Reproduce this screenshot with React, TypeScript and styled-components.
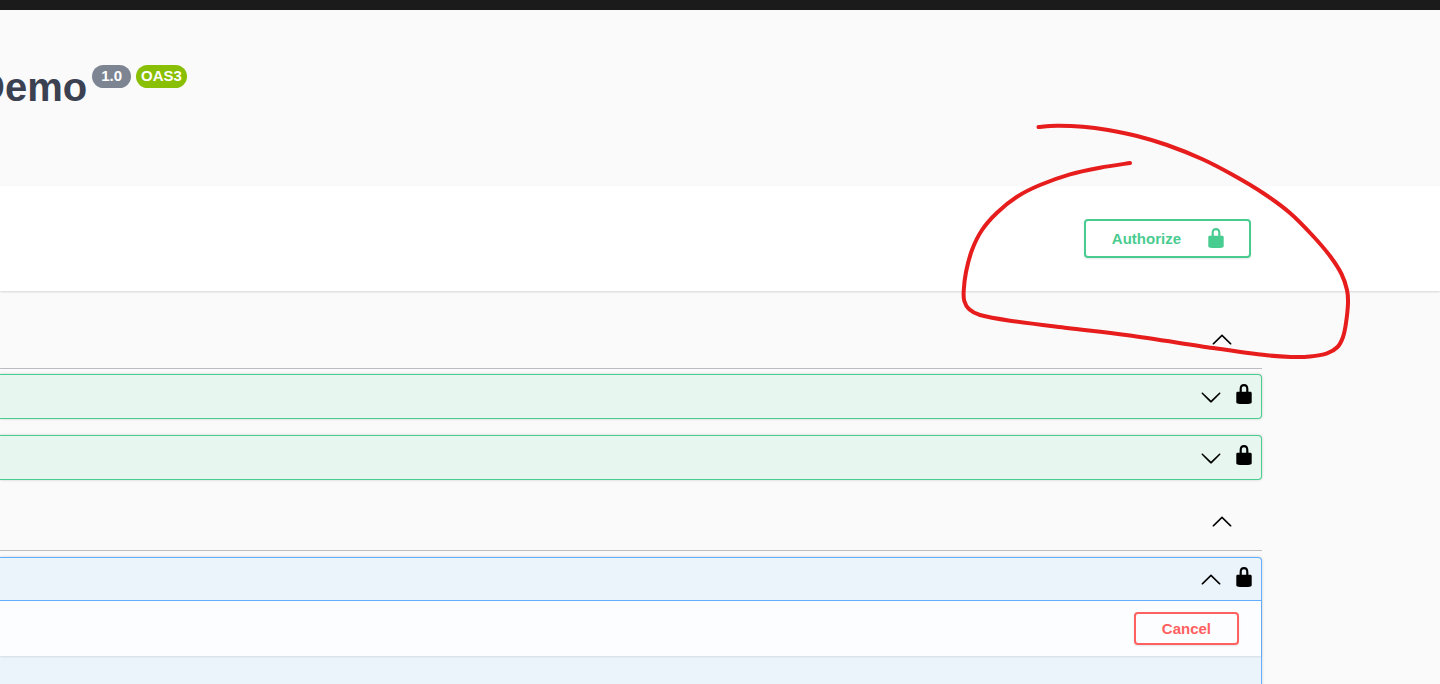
import React from "react";
import styled, { createGlobalStyle } from "styled-components";

const GlobalStyle = createGlobalStyle`
  * { box-sizing: border-box; }
  body {
    margin: 0;
    background: #fafafa;
    color: #3b4151;
    font-family: "Liberation Sans", Arial, sans-serif;
  }
`;

const Page = styled.div`
  position: relative;
  height: 100vh;
  overflow: hidden;
`;

const TopBar = styled.div`
  height: 10px;
  background: #1b1b1b;
`;

const Info = styled.header`
  display: flex;
  align-items: flex-start;
  gap: 5px;
  height: 176px;
  padding-top: 55px;
  margin-left: -24px;
`;

const Title = styled.h1`
  margin: 0;
  font-size: 40px;
  line-height: 44px;
  font-weight: 700;
`;

const Badge = styled.span<{ $color: string; $pad: number }>`
  height: 23px;
  padding: 0 ${(p) => p.$pad}px;
  border-radius: 12px;
  background: ${(p) => p.$color};
  color: #fff;
  font-size: 15px;
  line-height: 22px;
  font-weight: 700;
`;

const SchemeBand = styled.section`
  display: flex;
  justify-content: flex-end;
  padding: 33px 189px 33px 0;
  background: #fff;
  box-shadow: 0 1px 2px 0 rgba(0, 0, 0, 0.15);
`;

const Button = styled.button<{ $color: string }>`
  display: flex;
  align-items: center;
  height: 33px;
  padding: 0 26px;
  border: 2px solid ${(p) => p.$color};
  border-radius: 4px;
  background: transparent;
  box-shadow: 0 1px 2px rgba(0, 0, 0, 0.1);
  color: ${(p) => p.$color};
  font: 700 15px "Liberation Sans", Arial, sans-serif;
`;

const AuthorizeButton = styled(Button)`
  gap: 24px;
  height: 39px;
  padding: 0 22px 0 26px;
  svg {
    margin-bottom: 2px;
    fill: currentColor;
  }
`;

const Operations = styled.main`
  display: flex;
  flex-direction: column;
  padding-right: 178px;
`;

const TagHeader = styled.div<{ $height: number; $gap: number }>`
  display: flex;
  justify-content: flex-end;
  align-items: flex-end;
  height: ${(p) => p.$height}px;
  padding: 0 29px 18px 0;
  margin-bottom: ${(p) => p.$gap}px;
  border-bottom: 1px solid #bbbcc0;
`;

const Operation = styled.article<{ $color: string; $fill: string }>`
  margin-bottom: 16px;
  border: 1px solid ${(p) => p.$color};
  border-left: 0;
  border-radius: 0 4px 4px 0;
  background: ${(p) => p.$fill};
  box-shadow: 0 0 3px rgba(0, 0, 0, 0.19);
`;

const Summary = styled.div<{ $line?: string }>`
  display: flex;
  align-items: center;
  justify-content: flex-end;
  gap: 11px;
  height: 43px;
  padding-right: 6px;
  border-bottom: ${(p) => (p.$line ? `1px solid ${p.$line}` : "0")};
`;

const IconButton = styled.button`
  display: flex;
  padding: 0;
  border: 0;
  background: none;
  color: #000;
`;

const LockButton = styled(IconButton)`
  padding-bottom: 5px;
`;

const ParametersBar = styled.div`
  display: flex;
  justify-content: flex-end;
  height: 55px;
  padding: 11px 22px 0 0;
  background: rgba(255, 255, 255, 0.8);
  box-shadow: 0 1px 2px rgba(0, 0, 0, 0.1);
`;

const Parameters = styled.div`
  height: 80px;
`;

const Scribble = styled.svg`
  position: absolute;
  top: 110px;
  right: 80px;
  pointer-events: none;
`;

const Lock = () => (
  <svg width="22" height="22" viewBox="0 0 20 20" aria-hidden="true">
    <path d="M15.8 8H14V5.6C14 2.703 12.665 1 10 1 7.334 1 6 2.703 6 5.6V8H4c-.553 0-1 .646-1 1.199V17.2c0 .6.4 1.15.95 1.35C4.6 18.85 5.5 19 6.2 19h7.6c.7 0 1.6-.15 2.25-.45.55-.2.95-.75.95-1.35V9.199C17 8.646 16.352 8 15.8 8zM12 8H8V5.199C8 3.754 8.797 3 10 3c1.203 0 2 .754 2 2.199V8z" />
  </svg>
);

const Arrow = ({ down }: { down?: boolean }) => (
  <svg width="22" height="22" viewBox="0 0 20 20" aria-hidden="true">
    <path
      d={
        down
          ? "M17.418 6.109c.272-.268.709-.268.979 0s.271.701 0 .969l-7.908 7.83c-.27.268-.707.268-.979 0l-7.908-7.83c-.27-.268-.27-.701 0-.969.271-.268.709-.268.979 0L10 13.25l7.418-7.141z"
          : "M17.418 14.908c.272.268.709.268.979 0s.271-.701 0-.969l-7.908-7.83c-.27-.268-.707-.268-.979 0l-7.908 7.83c-.27.268-.27.701 0 .969.271.268.709.268.979 0L10 7.767l7.418 7.141z"
      }
    />
  </svg>
);

const OperationSummary = ({ open, line }: { open?: boolean; line?: string }) => (
  <Summary $line={line}>
    <IconButton aria-label={open ? "Collapse operation" : "Expand operation"}>
      <Arrow down={!open} />
    </IconButton>
    <LockButton aria-label="Authorization">
      <Lock />
    </LockButton>
  </Summary>
);

const GREEN = "#49cc90";
const BLUE = "#61affe";

const STROKE: [number, number][] = [
  [98.5, 17], [117, 15.7], [143, 16.7], [168, 20], [197, 26], [227, 35],
  [262, 49], [293, 65], [323, 83], [350, 103], [373, 126], [390, 146],
  [401.5, 164], [407, 180], [408, 193], [406, 213], [403, 227], [397.5, 237],
  [387, 243.3], [370, 246.5], [353, 247], [327, 245.3], [273, 238],
  [188, 225.3], [127, 218], [70, 210.7], [40, 205], [29, 199], [24.3, 191],
  [23.7, 181], [26, 162], [32, 140], [42, 120], [57, 102.7], [77, 86.7],
  [100, 75], [130, 64.3], [160, 57.7], [190, 53],
];

// Catmull-Rom spline through the pen points, written as cubic Béziers.
const smooth = (pts: [number, number][]) =>
  pts.slice(1).reduce((d, [x, y], i) => {
    const a = pts[Math.max(i - 1, 0)];
    const b = pts[i];
    const e = pts[Math.min(i + 2, pts.length - 1)];
    const c1 = [b[0] + (x - a[0]) / 6, b[1] + (y - a[1]) / 6];
    const c2 = [x - (e[0] - b[0]) / 6, y - (e[1] - b[1]) / 6];
    return `${d}C${c1} ${c2} ${x},${y}`;
  }, `M${pts[0]}`);

export default function App() {
  return (
    <Page>
      <GlobalStyle />
      <TopBar />
      <Info>
        <Title>Demo</Title>
        <Badge $color="#7d8492" $pad={9}>1.0</Badge>
        <Badge $color="#89bf04" $pad={5}>OAS3</Badge>
      </Info>
      <SchemeBand>
        <AuthorizeButton $color={GREEN}>
          Authorize
          <Lock />
        </AuthorizeButton>
      </SchemeBand>
      <Operations>
        <TagHeader $height={78} $gap={5}>
          <IconButton aria-label="Collapse section">
            <Arrow />
          </IconButton>
        </TagHeader>
        <Operation $color={GREEN} $fill="#e8f6f0">
          <OperationSummary />
        </Operation>
        <Operation $color={GREEN} $fill="#e8f6f0">
          <OperationSummary />
        </Operation>
        <TagHeader $height={55} $gap={6}>
          <IconButton aria-label="Collapse section">
            <Arrow />
          </IconButton>
        </TagHeader>
        <Operation $color={BLUE} $fill="#ebf3fb">
          <OperationSummary open line={BLUE} />
          <ParametersBar>
            <Button $color="#ff6060">Cancel</Button>
          </ParametersBar>
          <Parameters />
        </Operation>
      </Operations>
      <Scribble width="420" height="260" viewBox="0 0 420 260" aria-hidden="true">
        <path
          d={smooth(STROKE)}
          fill="none"
          stroke="#e71c1c"
          strokeWidth="4"
          strokeLinecap="round"
          strokeLinejoin="round"
        />
      </Scribble>
    </Page>
  );
}
